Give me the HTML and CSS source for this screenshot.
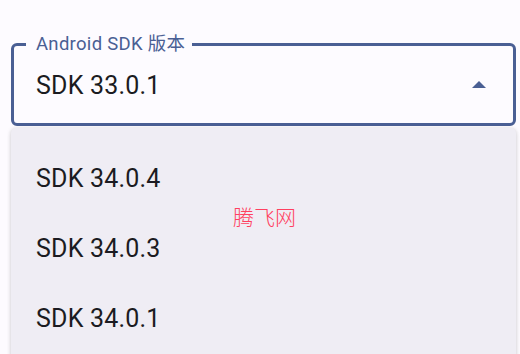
FILE: index.html
```html
<!DOCTYPE html>
<html lang="zh-CN">
<head>
  <meta charset="UTF-8">
  <meta name="viewport" content="width=device-width, initial-scale=1.0">
  <title>Android SDK 版本</title>
  <link rel="stylesheet" href="styles.css">
</head>
<body>
  <div class="screen">
    <fieldset class="select-field">
      <legend class="select-label">Android SDK 版本</legend>
      <div class="select-row">
        <span class="select-value">SDK 33.0.1</span>
        <span class="select-arrow"></span>
      </div>
    </fieldset>
    <ul class="menu">
      <li class="menu-item">SDK 34.0.4</li>
      <li class="menu-item">SDK 34.0.3</li>
      <li class="menu-item">SDK 34.0.1</li>
    </ul>
    <div class="watermark">腾飞网</div>
  </div>
</body>
</html>
```

FILE: styles.css
```css
html, body {
  margin: 0;
  height: 100%;
  overflow: hidden;
}
body {
  background-color: #fdfbff;
  font-family: Roboto, "Noto Sans CJK SC", sans-serif;
  color: #1b1b21;
}
.screen {
  position: relative;
  padding: 36px 4px 0 11px;
}
.select-field {
  margin: 0;
  padding: 0 27px 0 22px;
  border: 3px solid #4a5f94;
  border-radius: 6px;
}
.select-label {
  margin-left: -10px;
  padding: 0 7px 0 10px;
  font-size: 18.5px;
  line-height: 17px;
  letter-spacing: 0.3px;
  color: #4a5f94;
}
.select-row {
  display: flex;
  align-items: center;
  justify-content: space-between;
  height: 64px;
  padding-bottom: 6px;
}
.select-value {
  font-size: 25px;
  letter-spacing: 0.2px;
}
.select-arrow {
  width: 0;
  height: 0;
  border-left: 7px solid transparent;
  border-right: 7px solid transparent;
  border-bottom: 7px solid #4a5f94;
  margin-top: -2px;
}
.menu {
  list-style: none;
  margin: 2px 0 0 0;
  padding: 15px 0 0 0;
  height: 300px;
  background-color: #efedf4;
  border-radius: 5px 5px 0 0;
  box-shadow: 0 1px 4px rgba(0, 0, 0, 0.22);
}
.menu-item {
  display: flex;
  align-items: center;
  height: 70px;
  padding-left: 25px;
  font-size: 25px;
  letter-spacing: 0.2px;
}
.watermark {
  position: absolute;
  left: 233px;
  top: 201px;
  font-size: 21px;
  font-weight: 300;
  color: #ff4060;
}
```
